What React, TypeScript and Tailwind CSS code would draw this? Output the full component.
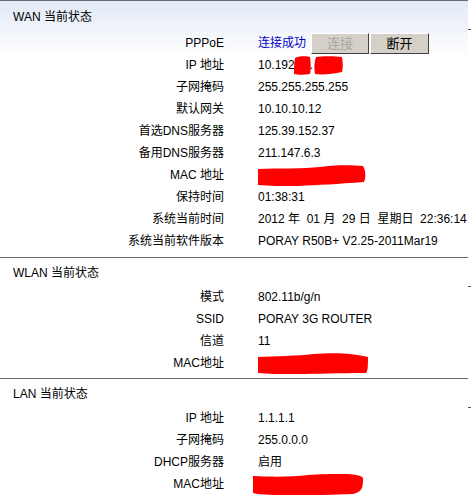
import type { ReactNode } from 'react';

type Row = { label: string; value: ReactNode };

function Scribble({ w, h, path }: { w: number; h: number; path: string }) {
  return (
    <svg width={w} height={h} viewBox={`0 0 ${w} ${h}`} className="block shrink-0">
      <path d={path} fill="#ff0000" />
    </svg>
  );
}

const ipBlur = (
  <span className="inline-flex items-center">
    10.192
    <span className="mx-[-1px] inline-block">
      <Scribble w={17} h={19} path="M1 2 C4 0 13 0 16 1 C17 8 17 14 16 18 C10 19 4 19 0 18 C0 12 0 7 1 2 Z" />
    </span>
    .
    <span className="ml-[1px] inline-block">
      <Scribble w={29} h={19} path="M2 1 C8 0 22 0 28 1 C29 7 29 12 28 16 C19 18 9 19 1 18 C0 12 0 7 2 1 Z" />
    </span>
  </span>
);

const macWan = (
  <Scribble w={108} h={21} path="M0 4 C20 3 45 4 62 2 C75 0 92 0 105 1 C108 6 108 13 106 17 C80 19 60 20 40 21 C25 21 10 21 0 20 C0 14 0 9 0 4 Z" />
);
const macWlan = (
  <Scribble w={110} h={21} path="M0 4 C18 3 40 3 55 1 C70 0 85 0 92 1 C100 2 106 3 110 4 C110 12 110 18 108 20 C80 20 60 21 40 21 C22 21 8 21 0 20 C0 14 0 9 0 4 Z" />
);
const macLan = (
  <Scribble w={110} h={21} path="M0 2 C18 3 40 3 55 1 C65 0 80 0 90 0 C100 0 108 1 110 4 C110 12 110 18 100 20 C80 21 60 21 40 21 C22 21 8 21 0 19 C0 12 0 7 0 2 Z" />
);

const wan: Row[] = [
  {
    label: 'PPPoE',
    value: (
      <span className="flex items-center">
        <span className="text-[#0000cc]">连接成功</span>
        <button
          disabled
          className="ml-[5px] h-[21px] w-[58px] bg-[#d4d0c8] text-[#a8a59e] border border-t-white border-l-white border-b-[#404040] border-r-[#404040] text-[13px] leading-none"
        >
          连接
        </button>
        <button className="ml-[1px] h-[21px] w-[59px] bg-[#d4d0c8] text-black border border-t-white border-l-white border-b-[#404040] border-r-[#404040] text-[13px] leading-none">
          断开
        </button>
      </span>
    ),
  },
  { label: 'IP 地址', value: ipBlur },
  { label: '子网掩码', value: '255.255.255.255' },
  { label: '默认网关', value: '10.10.10.12' },
  { label: '首选DNS服务器', value: '125.39.152.37' },
  { label: '备用DNS服务器', value: '211.147.6.3' },
  { label: 'MAC 地址', value: macWan },
  { label: '保持时间', value: '01:38:31' },
  { label: '系统当前时间', value: '2012 年  01 月  29 日  星期日  22:36:14' },
  { label: '系统当前软件版本', value: 'PORAY R50B+ V2.25-2011Mar19' },
];

const wlan: Row[] = [
  { label: '模式', value: '802.11b/g/n' },
  { label: 'SSID', value: 'PORAY 3G ROUTER' },
  { label: '信道', value: '11' },
  { label: 'MAC地址', value: macWlan },
];

const lan: Row[] = [
  { label: 'IP 地址', value: '1.1.1.1' },
  { label: '子网掩码', value: '255.0.0.0' },
  { label: 'DHCP服务器', value: '启用' },
  { label: 'MAC地址', value: <span className="-ml-[5px] block">{macLan}</span> },
];

function Section({ title, rows, headH, pb, top }: { title: string; rows: Row[]; headH: string; pb: string; top?: boolean }) {
  return (
    <section
      className={
        'relative w-[468px] border-t border-[#6b6b6b] ' +
        pb +
        (top ? ' bg-gradient-to-b from-[#e2eaf6] via-white via-[22%] to-white' : '')
      }
    >
      <div className={'flex items-center pl-[13px] pt-[2px] ' + headH}>{title}</div>
      {rows.map((r, i) => (
        <div key={i} className="flex h-[22px] items-center pt-[2px]">
          <div className="w-[224px] shrink-0 text-right">{r.label}</div>
          <div className="ml-[34px] flex items-center whitespace-pre">{r.value}</div>
        </div>
      ))}
      <span className="absolute right-[-3px] top-[28px] h-px w-[3px] bg-[#555]" />
    </section>
  );
}

export default function App() {
  return (
    <div
      className="h-[495px] w-[472px] overflow-hidden bg-white text-[12px] text-black"
      style={{ fontFamily: '"Liberation Sans", "Noto Sans CJK SC", sans-serif' }}
    >
      <Section title="WAN 当前状态" rows={wan} headH="h-[30px]" pb="pb-[6px]" top />
      <Section title="WLAN 当前状态" rows={wlan} headH="h-[27px]" pb="pb-[5px]" />
      <Section title="LAN 当前状态" rows={lan} headH="h-[27px]" pb="pb-[6px]" />
    </div>
  );
}
